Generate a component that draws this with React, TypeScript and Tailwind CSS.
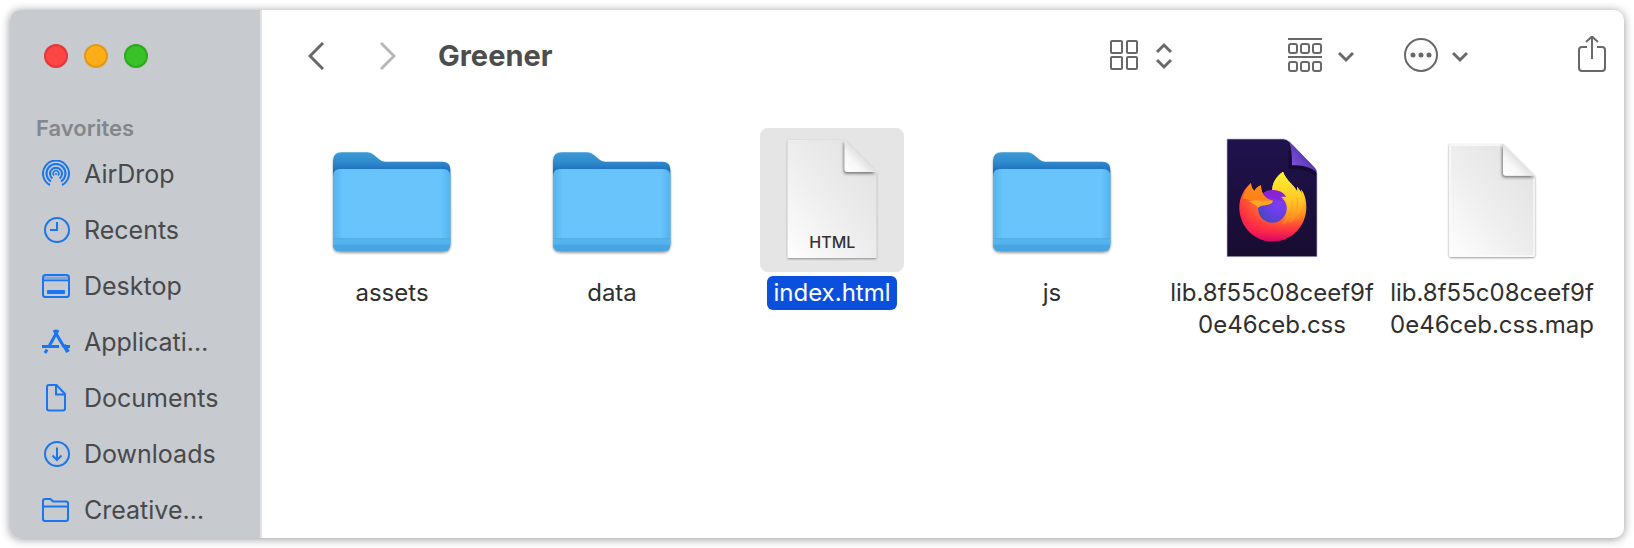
import React from "react";

type FileKind = "folder" | "html" | "firefox" | "blank";

const files: { name: string; kind: FileKind; selected?: boolean }[] = [
  { name: "assets", kind: "folder" },
  { name: "data", kind: "folder" },
  { name: "index.html", kind: "html", selected: true },
  { name: "js", kind: "folder" },
  { name: "lib.8f55c08ceef9f\n0e46ceb.css", kind: "firefox" },
  { name: "lib.8f55c08ceef9f\n0e46ceb.css.map", kind: "blank" },
];

const FolderIcon = () => (
  <svg className="size-36" viewBox="31 21 432 432" aria-hidden="true">
    <defs>
      <linearGradient id="folderBack" x1="0" y1="0" x2="0" y2="1">
        <stop offset="0" stopColor="#3d9ad8" />
        <stop offset="0.1" stopColor="#2f8acb" />
        <stop offset="0.2" stopColor="#1769bf" />
        <stop offset="1" stopColor="#1f78c8" />
      </linearGradient>
      <linearGradient id="folderFront" x1="0" y1="0" x2="1" y2="0">
        <stop offset="0" stopColor="#54b3ee" />
        <stop offset="0.08" stopColor="#67c4fb" />
        <stop offset="0.92" stopColor="#67c4fb" />
        <stop offset="1" stopColor="#54b3ee" />
      </linearGradient>
      <filter id="folderShadow" x="-10%" y="-10%" width="120%" height="120%">
        <feDropShadow dx="0" dy="4" stdDeviation="3" floodOpacity="0.4" />
      </filter>
    </defs>
    <g filter="url(#folderShadow)">
      <path
        d="M70 120Q70 94 96 94H174Q184 94 193 102L208 115Q216 122 226 122H398Q422 122 422 146V368Q422 391 399 391H93Q70 391 70 368Z"
        fill="url(#folderBack)"
      />
      <path
        d="M70 166Q70 144 92 144H400Q422 144 422 166V368Q422 391 399 391H93Q70 391 70 368Z"
        fill="url(#folderFront)"
      />
      <path d="M70 353H422V368Q422 391 399 391H93Q70 391 70 368Z" fill="#54b3ee" />
      <path d="M70 372H422Q420 391 399 391H93Q72 391 70 372Z" fill="#49a5e2" />
      <path d="M71 353H421M71 372H421" stroke="#4aa4df" strokeWidth="2" />
    </g>
  </svg>
);

const PaperDefs = () => (
  <defs>
    <linearGradient id="paper" x1="0" y1="1" x2="0.9" y2="0.1">
      <stop offset="0" stopColor="#fefefe" />
      <stop offset="0.5" stopColor="#eeeeee" />
      <stop offset="1" stopColor="#e2e2e2" />
    </linearGradient>
    <linearGradient id="fold" x1="0" y1="1" x2="0.5" y2="0.5">
      <stop offset="0" stopColor="#ffffff" />
      <stop offset="0.6" stopColor="#f7f7f7" />
      <stop offset="1" stopColor="#e2e2e2" />
    </linearGradient>
    <filter id="paperShadow" x="-10%" y="-10%" width="120%" height="120%">
      <feDropShadow dx="0" dy="3" stdDeviation="3" floodOpacity="0.4" />
    </filter>
    <filter id="foldShadow" x="-30%" y="-30%" width="160%" height="160%">
      <feDropShadow dx="-3" dy="5" stdDeviation="5" floodOpacity="0.5" />
    </filter>
  </defs>
);

const HtmlIcon = () => (
  <svg className="size-36" viewBox="60 54 432 432" aria-hidden="true">
    <PaperDefs />
    <clipPath id="htmlClip">
      <path d="M143 90H314L409 186V444H143Z" />
    </clipPath>
    <path d="M143 90H314L409 186V444H143Z" fill="url(#paper)" filter="url(#paperShadow)" />
    <g clipPath="url(#htmlClip)">
      <path d="M314 90V176Q314 186 324 186H409Z" fill="url(#fold)" filter="url(#foldShadow)" />
    </g>
    <text x="277" y="413" textAnchor="middle" fontFamily="Inter, sans-serif" fontSize="48" fontWeight="500" fill="#333333">
      HTML
    </text>
  </svg>
);

const BlankIcon = () => (
  <svg className="size-36" viewBox="121 54 432 432" aria-hidden="true">
    <PaperDefs />
    <clipPath id="blankClip">
      <path d="M208 102H371L466 198V441H208Z" />
    </clipPath>
    <path
      d="M208 102H371L466 198V434Q466 441 459 441H215Q208 441 208 434Z"
      fill="url(#paper)"
      filter="url(#paperShadow)"
    />
    <path d="M211 105H366M463 204V432Q463 438 457 438H217Q211 438 211 432V105" fill="none" stroke="#fafafa" strokeWidth="4" />
    <g clipPath="url(#blankClip)">
      <path d="M370 102V188Q370 197 380 197H466Z" fill="url(#fold)" filter="url(#foldShadow)" />
    </g>
  </svg>
);

const FirefoxIcon = () => (
  <svg className="size-36" viewBox="149 54 432 432" aria-hidden="true">
    <defs>
      <linearGradient id="ffPage" x1="0" y1="0" x2="0" y2="1">
        <stop offset="0" stopColor="#20124d" />
        <stop offset="1" stopColor="#180c30" />
      </linearGradient>
      <linearGradient id="ffFold" x1="0" y1="1" x2="0.6" y2="0.4">
        <stop offset="0" stopColor="#8a5cf5" />
        <stop offset="1" stopColor="#5a35ae" />
      </linearGradient>
      <radialGradient id="ffBody" gradientUnits="userSpaceOnUse" cx="425" cy="205" r="215">
        <stop offset="0" stopColor="#fff036" />
        <stop offset="0.25" stopColor="#ffd02c" />
        <stop offset="0.5" stopColor="#ff9420" />
        <stop offset="0.7" stopColor="#ff5533" />
        <stop offset="0.86" stopColor="#ff2e45" />
        <stop offset="1" stopColor="#e3125f" />
      </radialGradient>
      <linearGradient id="ffBase" x1="0" y1="0" x2="0" y2="1">
        <stop offset="0.3" stopColor="#ff3040" stopOpacity="0" />
        <stop offset="0.7" stopColor="#f8204e" stopOpacity="0.6" />
        <stop offset="1" stopColor="#d6006c" stopOpacity="0.9" />
      </linearGradient>
      <linearGradient id="ffFlame" x1="0" y1="0" x2="0" y2="1">
        <stop offset="0" stopColor="#fff22e" />
        <stop offset="0.5" stopColor="#ffc928" />
        <stop offset="1" stopColor="#ff8a1e" stopOpacity="0" />
      </linearGradient>
      <radialGradient id="ffGlobe" gradientUnits="userSpaceOnUse" cx="385" cy="282" r="62">
        <stop offset="0" stopColor="#7d3cf5" />
        <stop offset="0.5" stopColor="#6a3fe6" />
        <stop offset="1" stopColor="#4b46c4" />
      </radialGradient>
      <linearGradient id="ffHead" x1="0" y1="0" x2="0" y2="1">
        <stop offset="0" stopColor="#ff8a16" />
        <stop offset="1" stopColor="#ff7d1c" />
      </linearGradient>
    </defs>
    <path d="M230 87H400Q410 88 418 96L492 172Q500 180 500 190V440H230Z" fill="url(#ffPage)" stroke="#b9b3cf" strokeWidth="2" />
    <path d="M416 96Q424 115 424 166Q470 164 497 186V198Q470 176 414 176Z" fill="#0d0620" opacity="0.55" />
    <path d="M414 92Q426 112 425 166Q470 162 499 186Q498 178 490 170Z" fill="url(#ffFold)" />
    <path
      d="M302 219C278 238 266 268 267 296C269 350 312 394 367 394C424 394 468 348 468 292C468 267 462 250 452 238L454 250L440 230L442 246C432 226 408 212 398 185C376 200 364 222 366 244C352 243 343 247 338 252C333 242 332 234 332 226C323 229 316 236 312 243C306 237 302 229 302 219Z"
      fill="url(#ffBody)"
    />
    <path d="M267 290C267 350 312 394 367 394C424 394 468 348 468 290Z" fill="url(#ffBase)" />
    <path
      d="M398 185C376 200 364 222 366 244C390 240 410 258 412 285C416 310 405 335 385 350C425 345 455 315 462 270C460 250 448 240 440 230L442 246C432 226 408 212 398 185Z"
      fill="url(#ffFlame)"
    />
    <circle cx="366" cy="295" r="43" fill="url(#ffGlobe)" />
    <path d="M336 252C344 242 356 240 370 240C388 241 401 248 408 262C398 259 391 261 389 266C393 268 398 271 400 275C380 266 360 262 345 268Z" fill="#8a22d6" />
    <path
      d="M302 219C290 232 280 250 276 268C290 265 308 270 324 290C330 286 342 286 352 284C362 281 368 277 367 271C356 269 346 264 338 252C333 243 332 234 332 226C323 229 316 236 312 243C306 237 302 229 302 219Z"
      fill="url(#ffHead)"
    />
    <path d="M294 274C310 268 340 274 367 272C367 278 361 282 352 284C340 286 330 285 324 294C316 283 306 280 294 274Z" fill="#ffa528" />
    <path d="M424 272C430 300 416 328 396 342M440 262C446 292 436 318 420 336" fill="none" stroke="#ff9d1e" strokeWidth="4" opacity="0.6" />
  </svg>
);

const fileIcons = {
  folder: FolderIcon,
  html: HtmlIcon,
  firefox: FirefoxIcon,
  blank: BlankIcon,
};

const AirDropIcon = () => (
  <>
    <path d="M8 25A13 13 0 1 1 20 25" />
    <path d="M9 21.500A9.500 9.500 0 1 1 19 21.500" />
    <path d="M10.500 18.500A6 6 0 1 1 17.500 18.500" />
    <path d="M12 15.500A2.800 2.800 0 1 1 16 15.500" strokeWidth="1.500" />
    <circle cx="14" cy="14" r="1" fill="currentColor" stroke="none" />
  </>
);

const RecentsIcon = () => (
  <>
    <circle cx="15" cy="14" r="12" />
    <path d="M15 6V14H8" />
  </>
);

const DesktopIcon = () => (
  <>
    <rect x="1" y="3" width="26" height="22" rx="2.500" />
    <path d="M2 4.500H26V8H2Z" fill="currentColor" fillOpacity="0.4" stroke="none" />
    <path d="M1 8.500H27" strokeWidth="1.500" />
    <rect x="5" y="18" width="18" height="4" rx="1" fill="currentColor" stroke="none" />
  </>
);

const ApplicationsIcon = () => (
  <g strokeWidth="3">
    <path d="M12 2L22 19" strokeWidth="3" />
    <path d="M22 17L26 24" strokeWidth="4" />
    <path d="M16 2L7 18.500" />
    <path d="M0 18.500H17M21 18.500H28" />
    <path d="M5 21.500L3 25" />
  </g>
);

const DocumentsIcon = () => (
  <>
    <path d="M7 1H14.500L23 10V24.500A2 2 0 0 1 21 26.500H7A2 2 0 0 1 5 24.500V3A2 2 0 0 1 7 1Z" />
    <path d="M14 1.500V10.500H22.500" />
  </>
);

const DownloadsIcon = () => (
  <>
    <circle cx="15" cy="14" r="12" />
    <path d="M15 7.500V20M10.500 15.500L15 20L19.500 15.500" />
  </>
);

const CreativeIcon = () => (
  <>
    <path d="M1 5A2 2 0 0 1 3 3H8.500L11 5.500H24A2 2 0 0 1 26 7.500V23A2 2 0 0 1 24 25H3A2 2 0 0 1 1 23Z" />
    <path d="M1 10.500H26" />
  </>
);

const favorites = [
  { name: "AirDrop", icon: AirDropIcon },
  { name: "Recents", icon: RecentsIcon },
  { name: "Desktop", icon: DesktopIcon },
  { name: "Applicati…", icon: ApplicationsIcon },
  { name: "Documents", icon: DocumentsIcon },
  { name: "Downloads", icon: DownloadsIcon },
  { name: "Creative…", icon: CreativeIcon },
];

const ChevronDown = () => (
  <svg className="h-9 w-4" viewBox="0 0 16 36" fill="none" stroke="currentColor" strokeWidth="3" aria-hidden="true">
    <path d="M1 15L8 22L15 15" />
  </svg>
);

const Sidebar = () => {
  return (
    <aside className="w-[252px] shrink-0 border-r-2 border-[#e2e2e2] bg-[#c7cacf]">
      <div className="flex h-[92px] items-center gap-4 pl-[34px]">
        <button aria-label="Close" className="size-6 rounded-full border-2 border-[#e2383b] bg-[#fc4646]"></button>
        <button aria-label="Minimize" className="size-6 rounded-full border-2 border-[#e09a18] bg-[#fdad18]"></button>
        <button aria-label="Zoom" className="size-6 rounded-full border-2 border-[#2eab1c] bg-[#39c129]"></button>
      </div>
      <h2 className="pt-3 pb-1 pl-[26px] text-[22px] leading-7 font-semibold text-[#83868b]">Favorites</h2>
      <nav>
        {favorites.map(({ name, icon: Icon }) => (
          <a key={name} href="#" className="flex h-14 items-center gap-[14px] pl-8 text-[25px] text-[#48494b]">
            <svg
              className="size-7 shrink-0 text-[#1a76ee]"
              viewBox="0 0 28 28"
              fill="none"
              stroke="currentColor"
              strokeWidth="2"
              aria-hidden="true"
            >
              <Icon />
            </svg>
            <span className="pt-0.5">{name}</span>
          </a>
        ))}
      </nav>
    </aside>
  );
};

const Toolbar = () => {
  return (
    <header className="flex h-[92px] items-center pr-[18px] pl-[46px] text-[#686868]">
      <button aria-label="Back" className="mr-14">
        <svg className="h-7 w-4" viewBox="0 0 16 28" fill="none" stroke="currentColor" strokeWidth="3" aria-hidden="true">
          <path d="M15 1L2 14L15 27" />
        </svg>
      </button>
      <button aria-label="Forward" className="mr-[42px] text-[#b8b8b8]">
        <svg className="h-7 w-4" viewBox="0 0 16 28" fill="none" stroke="currentColor" strokeWidth="3" aria-hidden="true">
          <path d="M1 1L14 14L1 27" />
        </svg>
      </button>
      <h1 className="flex-1 text-[29px] font-bold text-[#4d4d4d]">Greener</h1>
      <button aria-label="View as icons" className="mr-[116px] flex items-center gap-[18px]">
        <svg className="h-8 w-7" viewBox="0 0 28 32" fill="none" stroke="currentColor" strokeWidth="2" aria-hidden="true">
          <rect x="1" y="1" width="11" height="12" rx="1" />
          <rect x="17" y="1" width="10" height="12" rx="1" />
          <rect x="1" y="17" width="11" height="12" rx="1" />
          <rect x="17" y="17" width="10" height="12" rx="1" />
        </svg>
        <svg className="h-8 w-4" viewBox="0 0 16 32" fill="none" stroke="currentColor" strokeWidth="3" aria-hidden="true">
          <path d="M1 12L8 5L15 12M1 20L8 27L15 20" />
        </svg>
      </button>
      <button aria-label="Group" className="mr-[50px] flex items-center gap-4">
        <svg className="h-9 w-[34px]" viewBox="0 0 34 36" fill="none" stroke="currentColor" strokeWidth="2" aria-hidden="true">
          <path d="M0 1H34M0 19H34" />
          <rect x="1" y="6" width="8" height="9" rx="2" />
          <rect x="13" y="6" width="8" height="9" rx="2" />
          <rect x="25" y="6" width="8" height="9" rx="2" />
          <rect x="1" y="24" width="8" height="9" rx="2" />
          <rect x="13" y="24" width="8" height="9" rx="2" />
          <rect x="25" y="24" width="8" height="9" rx="2" />
        </svg>
        <ChevronDown />
      </button>
      <button aria-label="Actions" className="mr-[110px] flex items-center gap-[14px]">
        <svg className="h-9 w-[34px]" viewBox="0 0 34 36" fill="none" stroke="currentColor" strokeWidth="2" aria-hidden="true">
          <circle cx="17" cy="17" r="16" />
          <g fill="currentColor" stroke="none">
            <circle cx="9" cy="17" r="2.500" />
            <circle cx="17" cy="17" r="2.500" />
            <circle cx="25" cy="17" r="2.500" />
          </g>
        </svg>
        <ChevronDown />
      </button>
      <button aria-label="Share">
        <svg className="h-10 w-7" viewBox="0 0 28 40" fill="none" stroke="currentColor" strokeWidth="2" aria-hidden="true">
          <path d="M9 11H4A3 3 0 0 0 1 14V32A3 3 0 0 0 4 35H24A3 3 0 0 0 27 32V14A3 3 0 0 0 24 11H19" />
          <path d="M14 23V1M8 6L14 0.500L20 6" />
        </svg>
      </button>
    </header>
  );
};

export default function App() {
  return (
    <div className="flex min-h-screen bg-white p-2.5 font-['Inter',sans-serif]">
      <div className="flex flex-1 overflow-hidden rounded-[10px] bg-white shadow-[0_1px_10px_rgba(0,0,0,0.42)]">
        <Sidebar />
        <main className="min-w-0 flex-1">
          <Toolbar />
          <div className="grid grid-cols-6 items-start pt-[26px] pr-[22px] pl-5">
            {files.map(({ name, kind, selected }) => {
              const Icon = fileIcons[kind];
              return (
                <button key={name} className="flex flex-col items-center gap-1">
                  <span className={selected ? "rounded-lg bg-[#e5e5e5]" : "rounded-lg"}>
                    <Icon />
                  </span>
                  <span
                    className={
                      selected
                        ? "rounded-md bg-[#0a50dd] px-1.5 py-px text-2xl text-white"
                        : "py-px text-2xl whitespace-pre text-[#2f2f2f]"
                    }
                  >
                    {name}
                  </span>
                </button>
              );
            })}
          </div>
        </main>
      </div>
    </div>
  );
}
